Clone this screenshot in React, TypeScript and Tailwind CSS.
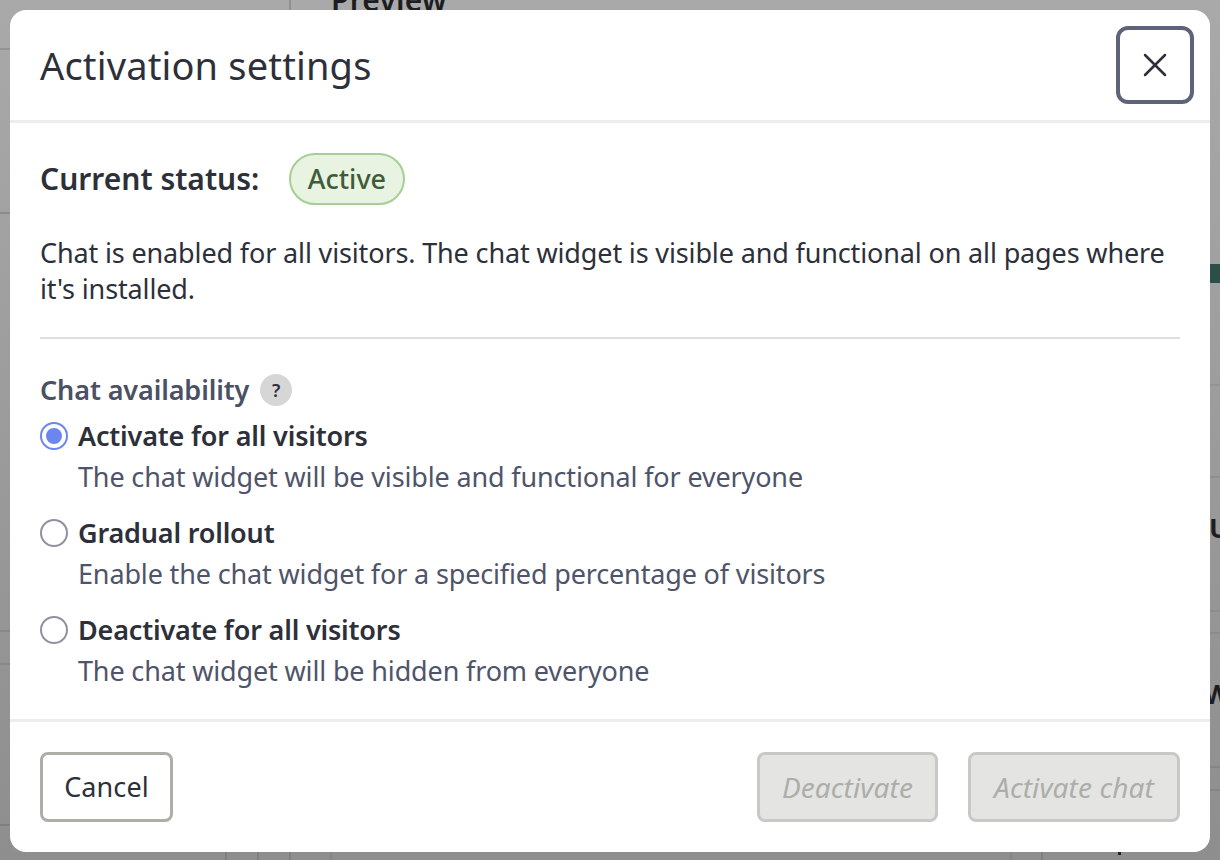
import { X } from "lucide-react";

const options = [
  {
    title: "Activate for all visitors",
    hint: "The chat widget will be visible and functional for everyone",
    checked: true,
  },
  {
    title: "Gradual rollout",
    hint: "Enable the chat widget for a specified percentage of visitors",
    checked: false,
  },
  {
    title: "Deactivate for all visitors",
    hint: "The chat widget will be hidden from everyone",
    checked: false,
  },
];

function Backdrop() {
  return (
    <div className="absolute inset-0 overflow-hidden bg-gradient-to-b from-[#a9a9a9] to-[#8e8e8e]">
      <div className="absolute left-[289px] top-0 h-[10px] w-[2px] bg-[#919191]" />
      <div className="absolute left-[225px] bottom-0 h-[8px] w-[2px] bg-[#7f7f7f]" />
      <div className="absolute left-[257px] bottom-0 h-[8px] w-[2px] bg-[#7f7f7f]" />
      <div className="absolute left-[289px] bottom-0 h-[8px] w-[2px] bg-[#7f7f7f]" />
      <div className="absolute left-[330px] bottom-0 h-[8px] w-[2px] bg-[#858585]" />
      <div className="absolute left-[1010px] bottom-0 h-[8px] w-[2px] bg-[#858585]" />
      <div className="absolute left-[1041px] bottom-0 h-[8px] w-[2px] bg-[#7f7f7f]" />
      <div className="absolute left-[1118px] top-[852px] h-[3px] w-[3px] bg-[#222222]" />
      <div className="absolute left-0 top-[48px] h-[2px] w-[10px] bg-[#939393]" />
      <div className="absolute left-0 top-[212px] h-[2px] w-[10px] bg-[#8c8c8c]" />
      <div className="absolute left-0 top-[630px] h-[2px] w-[10px] bg-[#888888]" />
      <div className="absolute left-0 top-[663px] h-[2px] w-[10px] bg-[#888888]" />
      <div className="absolute left-0 top-[824px] h-[2px] w-[10px] bg-[#7f7f7f]" />
      <div className="absolute right-0 top-[264px] h-[19px] w-[10px] bg-[#2a4f49]" />
      <div className="absolute right-0 top-[384px] h-[2px] w-[10px] bg-[#939393]" />
      <div className="absolute right-0 top-[476px] h-[2px] w-[10px] bg-[#8f8f8f]" />
      <div className="absolute right-0 top-[610px] h-[2px] w-[10px] bg-[#8c8c8c]" />
      <div className="absolute right-0 top-[632px] h-[2px] w-[10px] bg-[#8c8c8c]" />
      <div className="absolute right-0 top-[766px] h-[2px] w-[10px] bg-[#858585]" />
      <div className="absolute right-0 top-[789px] h-[2px] w-[10px] bg-[#858585]" />
      <div className="absolute left-[1209px] top-[514px] text-[27px] font-bold leading-[28px] text-[#1c1d22]">U</div>
      <div className="absolute left-[1204px] top-[680px] text-[27px] font-bold leading-[28px] text-[#1c1d22]">W</div>
      <div className="absolute left-[331px] top-[-13px] text-[30px] font-semibold leading-[26px] tracking-[0.2px] text-[#1c1d22]">
        Preview
      </div>
    </div>
  );
}

function Radio({ checked }: { checked: boolean }) {
  if (checked) {
    return (
      <span className="flex h-[28px] w-[28px] shrink-0 items-center justify-center rounded-full border-2 border-[#6b86ee] bg-white">
        <span className="h-[16px] w-[16px] rounded-full bg-[#6b86ee]" />
      </span>
    );
  }
  return <span className="h-[28px] w-[28px] shrink-0 rounded-full border-2 border-[#8f91a3] bg-white" />;
}

export default function App() {
  return (
    <div
      className="relative h-[860px] w-[1220px] overflow-hidden"
      style={{ fontFamily: '"Noto Sans", sans-serif' }}
    >
      <Backdrop />
      <div className="relative flex h-full flex-col p-[10px]">
        <div className="flex h-[842px] shrink-0 flex-col rounded-[16px] bg-white text-[#2d3039]">
          <header className="flex h-[113px] shrink-0 items-center justify-between border-b-[3px] border-[#ededed] pl-[30px] pr-[16px]">
            <h1 className="text-[38px] leading-[48px] tracking-[0.16px]">Activation settings</h1>
            <button className="flex h-[78px] w-[78px] items-center justify-center rounded-[12px] border-[4px] border-[#5f6379]">
              <X className="h-[40px] w-[40px]" strokeWidth={1.5} />
            </button>
          </header>

          <div className="flex flex-1 flex-col px-[30px]">
            <div className="mt-[30px] flex h-[53px] items-start">
              <span className="mt-[6px] text-[30px] font-semibold leading-[40px]">Current status:</span>
              <span className="ml-[30px] flex h-[52px] items-center rounded-full border-2 border-[#a5cf95] bg-[#e8f3e2] px-[16.5px] text-[27px] font-medium text-[#3f5c38]">
                Active
              </span>
            </div>
            <p className="mt-[29px] text-[27px] leading-[36px] tracking-[-0.14px]">
              Chat is enabled for all visitors. The chat widget is visible and functional on all pages where it's
              installed.
            </p>
            <div className="mt-[30px] h-[2px] bg-[#dedede]" />

            <div className="mt-[33px] flex items-center gap-[11px]">
              <span className="text-[27px] font-semibold leading-[36px] tracking-[-0.12px] text-[#4b5064]">
                Chat availability
              </span>
              <span className="flex h-[32px] w-[32px] items-center justify-center rounded-full bg-[#d6d6d6] text-[18px] font-semibold">
                ?
              </span>
            </div>

            <div className="mt-[10px] flex flex-col gap-[20px]">
              {options.map((o) => (
                <label key={o.title} className="flex gap-[10px]">
                  <span className="flex h-[36px] items-center">
                    <Radio checked={o.checked} />
                  </span>
                  <span className="flex flex-col">
                    <span className="text-[27px] font-semibold leading-[36px] tracking-[-0.18px]">{o.title}</span>
                    <span className="mt-[5px] text-[27px] leading-[36px] tracking-[-0.15px] text-[#4f546a]">{o.hint}</span>
                  </span>
                </label>
              ))}
            </div>
          </div>

          <footer className="flex h-[133px] shrink-0 items-start justify-between border-t-[3px] border-[#ededed] px-[30px] pt-[30px]">
            <button className="h-[70px] w-[133px] rounded-[8px] border-[3px] border-[#aeaea8] text-[27px] tracking-[0.1px]">
              Cancel
            </button>
            <div className="flex gap-[30px]">
              <button className="h-[70px] w-[181px] rounded-[8px] border-[3px] border-[#c8c8c4] bg-[#e4e4e2] text-[28px] italic tracking-[0.1px] text-[#adadaa]">
                Deactivate
              </button>
              <button className="h-[70px] w-[212px] rounded-[8px] border-[3px] border-[#c8c8c4] bg-[#e4e4e2] text-[28px] italic tracking-[0.1px] text-[#adadaa]">
                Activate chat
              </button>
            </div>
          </footer>
        </div>
      </div>
    </div>
  );
}
